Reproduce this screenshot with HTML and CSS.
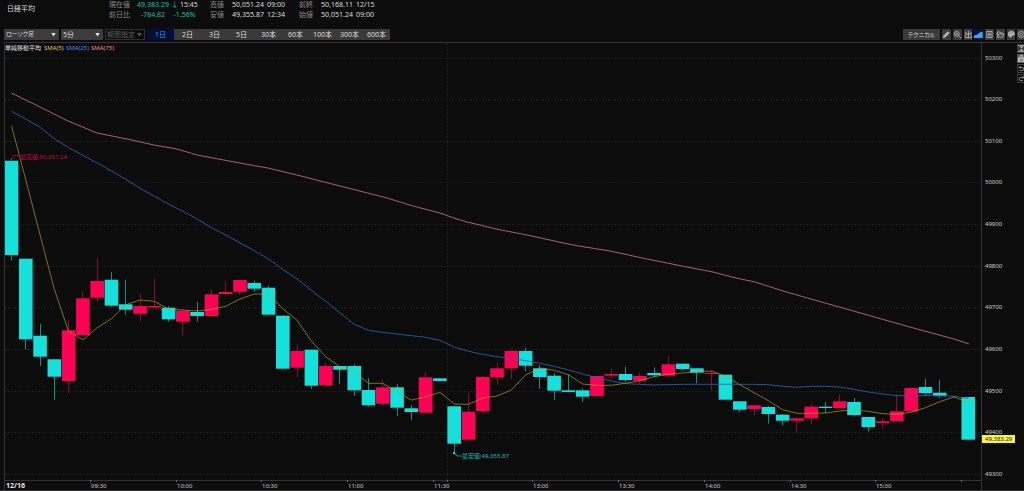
FILE: index.html
```html
<!DOCTYPE html>
<html lang="ja">
<head>
<meta charset="utf-8">
<title>日経平均</title>
<link rel="stylesheet" href="styles.css">
</head>
<body>
<header class="quote">
  <h1 class="name">日経平均</h1>
  <div class="figures">
    <span class="label">現在値</span><span class="num down">49,383.29</span><span class="num"><span class="down">↓</span> 15:45</span>
    <span class="label second">高値</span><span class="num">50,051.24</span><span class="time">09:00</span>
    <span class="label">前終</span><span class="num">50,168.11</span><span class="time">12/15</span>
    <span class="label">前日比</span><span class="num down">-784.82</span><span class="num down">-1.56%</span>
    <span class="label second">安値</span><span class="num">49,355.87</span><span class="time">12:34</span>
    <span class="label">始値</span><span class="num">50,051.24</span><span class="time">09:00</span>
  </div>
</header>

<nav class="toolbar">
  <label class="pick pick-type"><select aria-label="チャート種類"><option>ローソク足</option></select><span class="arrow"></span></label>
  <label class="pick pick-span"><select aria-label="足の間隔"><option>5分</option></select><span class="arrow"></span></label>
  <label class="pick pick-range off"><select aria-label="期間" disabled><option>期間指定</option></select><span class="arrow"></span></label>
  <div class="periods">
    <button class="on">1日</button><button>2日</button><button>3日</button><button>5日</button><button>30本</button><button>60本</button><button>100本</button><button>300本</button><button>600本</button>
  </div>
  <button class="technical">テクニカル</button>
  <div class="tools">
    <button aria-label="描画"><svg viewBox="0 0 10 10"><path class="fill" d="M1 9l.6-2.600L6.700 1.200l2 2L3.600 8.400z"/></svg></button>
    <button aria-label="拡大"><svg viewBox="0 0 10 10"><circle cx="4.300" cy="4.300" r="2.800"/><path d="M6.300 6.300L9 9M3 4.300h2.600M4.300 3v2.600"/></svg></button>
    <button aria-label="表示"><svg viewBox="0 0 10 10"><path d="M5 1v8M2 2v2.500h6V2M1.500 5.500v3h7v-3"/></svg></button>
    <button class="on" aria-label="出来高"><svg viewBox="0 0 10 10"><path class="blue" d="M0 9V6l4-1 2-2 4-1.500V9z"/></svg></button>
    <button aria-label="一覧"><svg viewBox="0 0 10 10"><path d="M2 1.500h6v7H2zM3.500 3.500h3M3.500 5h3M3.500 6.500h3"/></svg></button>
    <button aria-label="開く"><svg viewBox="0 0 10 10"><path d="M1.500 8V2h2.500l1 1.200h2.500v1.300M1.500 8l1.600-3.500H9L7.700 8z"/></svg></button>
    <button aria-label="配色"><svg viewBox="0 0 10 10"><path class="fill" fill-rule="evenodd" d="M5 1C2.500 1 1 2.700 1 4.800s1.600 3.700 3.500 3.700c1 0 .3-1.700 1.300-2S9 6.500 9 4.500 7.400 1 5 1zM3 3.200h1v1H3zM5.500 2.500h1v1h-1zM2.500 5.200h1v1h-1z"/></svg></button>
    <button aria-label="設定"><svg viewBox="0 0 10 10"><circle cx="5" cy="5" r="3.500"/><circle cx="5" cy="5" r="1.300"/></svg></button>
  </div>
</nav>

<main class="chart">
  <svg class="plot" viewBox="0 42 1024 449" role="img" aria-label="日経平均 5分足">
    <g id="grid"></g>
    <g id="candles"></g>
    <polyline id="sma75" class="sma pink" points="11.500,93 40,107 68,121 97,133 127,139 154,145 177,149 197,155 256,166 268,168 297,175 340,186 387,198 413,206 440,213 454,218 467,222 480,225 496,229 527,235 573,245 610,251 647,259 687,267 713,272 736,278 755,282 783,291 825,303 857,312 885,320 917,329 954,339 969,344"/>
    <polyline id="sma25" class="sma azure"/>
    <polyline id="sma5" class="sma yellow"/>
    <path class="frame" d="M4.500 491V42.500H1024M4 480.500H981M981.500 42V491M0 490.500H1024"/>
    <g class="legend">
      <text x="5" y="50" class="t-white">単純移動平均</text>
      <text x="44" y="50" class="t-yellow">SMA(5)</text>
      <text x="66" y="50" class="t-azure">SMA(25)</text>
      <text x="91" y="50" class="t-pink">SMA(75)</text>
    </g>
    <path class="lead-red" d="M12 158l2-2.500h6"/><circle cx="11.500" cy="159" r="1" fill="#d80048"/>
    <text x="20" y="159" class="t-red">最高値:50,051.24</text>
    <path class="lead-cyan" d="M454 453l3 3h5"/><circle cx="454" cy="453" r="1.200" fill="#14e0dc"/>
    <text x="462" y="458" class="t-cyan">最安値:49,355.87</text>
    <g id="axis"></g>
    <rect x="982" y="435" width="33" height="8" class="tag"/>
    <text x="985" y="441" class="tag-text">49,383.29</text>
  </svg>
  <div class="side">
    <button aria-label="上下"><svg viewBox="0 0 10 10"><path class="fill" d="M1 1h8v1H1zM2.500 2.500h5L5 4.700zM2.500 7.500h5L5 5.300zM1 8h8v1H1z"/></svg></button>
    <button class="lit" aria-label="固定"><svg viewBox="0 0 10 10"><path class="fill" fill-rule="evenodd" d="M1 4h2V2l2-1.200L7 2v2h2v5H1zM4 4h2V2.500H4zM3.500 6h3v1.500h-3z"/></svg></button>
    <button class="hollow" aria-label="元に戻す"><svg viewBox="0 0 10 10"><path d="M3.500 1.500L1.500 3.500l2 2M1.500 3.500H6a2 2 0 010 4.500H3"/></svg></button>
    <button class="hollow" aria-label="やり直し"><svg viewBox="0 0 10 10"><path d="M6.500 1.500l2 2-2 2M8.500 3.500H4A2 2 0 004 8h3"/></svg></button>
  </div>
</main>
<script src="chart.js"></script>
</body>
</html>
```

FILE: styles.css
```css
* { box-sizing: border-box; }
body {
  margin: 0;
  background: #0c0c0c;
  color: #dcdcdc;
  font: 7px/10px "Noto Sans", "Noto Sans CJK JP", sans-serif;
  overflow: hidden;
}
button, select { font: inherit; color: inherit; border: 0; padding: 0; margin: 0; border-radius: 0; }

.quote { display: flex; height: 28px; padding-left: 7px; }
.name { width: 102px; margin: 0; padding-top: 4px; font-size: 7px; font-weight: 400; line-height: 10px; }
.figures {
  display: grid;
  grid-template-columns: 28px 32px 31px 32px 32px 35px 22px 32px 24px;
  grid-auto-rows: 10px;
  white-space: nowrap;
}
.label { color: #8a8a8a; }
.second { padding-left: 10px; }
.num { text-align: center; }
.time { padding-left: 3px; }
.down { color: #0ec4ae; }

.toolbar { display: flex; height: 14px; padding: 1px 0 2px 4px; gap: 2px; overflow: hidden; }
.pick { display: grid; background: #3c3c3c; align-items: center; }
.pick select, .pick .arrow { grid-area: 1 / 1; }
.pick select { appearance: none; width: 100%; height: 11px; padding-left: 2px; background: transparent; line-height: 11px; outline: 0; }
.pick .arrow { justify-self: end; width: 5px; height: 4px; margin-right: 3px; background: #e4e4e4; clip-path: polygon(0 0, 100% 0, 50% 100%); pointer-events: none; }
.pick-type { width: 55px; }
.pick-type select { font-size: 6px; font-feature-settings: "palt"; }
.pick-span { width: 42px; }
.pick-range { width: 40px; }
.off { background: #0c0c0c; border: 1px solid #303030; }
.off select { height: 9px; padding-left: 1px; line-height: 9px; opacity: 1; color: #5c5c5c; }
.off .arrow { background: #5c5c5c; margin-right: 2px; }
.periods { display: flex; background: #3a3a3a; }
.periods button { width: 27px; background: #3a3a3a; line-height: 11px; }
.periods .on { background: #020f38; color: #2b9cf0; }
.technical { width: 37px; margin-left: auto; background: #3a3a3a; font-size: 6px; font-feature-settings: "palt"; }
.tools { display: flex; gap: 2px; width: 84px; margin-right: -2px; }
.tools button { flex: 1; min-width: 0; background: #3c3c3c; }
.tools .on { background: #03133f; }
.tools svg, .side svg { display: block; width: 100%; height: 9px; fill: none; stroke: #b8b8b8; stroke-width: 1; }
svg .fill { fill: #b8b8b8; stroke: none; }
svg .blue { fill: #35a4f4; stroke: none; }

.chart { position: relative; overflow: hidden; }
.plot { display: block; width: 100%; height: auto; font-size: 6px; }
.side { position: absolute; top: 2px; right: -2px; display: grid; gap: 1px; }
.side button { width: 9px; height: 9px; background: #3c3c3c; }
.side .lit { background: #5a5a5a; }
.side .hollow { background: #0c0c0c; border: 1px solid #3c3c3c; }
.side .hollow svg { height: 7px; }

.frame { fill: none; stroke: #343434; }
.gridline { stroke: #1b1b1b; stroke-dasharray: 2 1; }
.tick { stroke: #686868; }
.up-bar { fill: #ff0055; }
.down-bar { fill: #14e0dc; }
.up-wick { stroke: #8c0835; }
.down-wick { stroke: #108e8a; }
.sma { fill: none; stroke-width: 1; stroke-linejoin: round; }
.pink { stroke: #a86076; }
.azure { stroke: #2a60b4; stroke-opacity: .85; }
.yellow { stroke: #b8a818; stroke-opacity: .65; }
.t-white { fill: #e0e0e0; }
.t-yellow { fill: #d8cc18; }
.t-azure { fill: #3c88f8; }
.t-pink { fill: #f880a0; }
.t-red { fill: #d00448; }
.t-cyan { fill: #10c0b8; }
.lead-red { fill: none; stroke: #a00438; }
.lead-cyan { fill: none; stroke: #108e8a; }
.price, .clock { fill: #cccccc; }
.date { fill: #e4e4e4; font-size: 7px; font-weight: 700; }
.tag { fill: #fbf04c; }
.tag-text { fill: #302c08; }
```

FILE: chart.js
```js
// Each candle: slot, direction, body top, body bottom, wick top, wick bottom.
const candles = [
  [0,'d',160.7,255,160.7,260.5],[1,'d',258.7,339.3,258.7,349],[2,'d',335.7,356.7,323.7,366],
  [3,'d',359.3,376.7,359.3,399.7],[4,'u',330.3,381,320.3,393],[5,'u',298.3,335,291.7,335],
  [6,'u',281,297.7,257.7,302.3],[7,'d',279.7,305.7,272,306.7],[8,'d',304.3,309.7,279.7,314.7],
  [9,'u',306,313.7,294,321],[10,'u',306,307.5,278,307.5],[11,'d',307.7,319.3,306.3,321.7],
  [12,'u',310.7,321.7,309,335.7],[13,'d',312,316,302,321.7],[14,'u',294.3,316,289,316],
  [15,'u',292,294,281,295.3],[16,'u',280,291.7,280,295],[17,'d',283,288.7,280.7,291.3],
  [18,'d',287.7,314.7,285.7,314.7],[19,'d',315.7,368.7,315.7,368.7],[20,'u',351,367.7,344,377],
  [21,'d',349.7,385.7,349.7,389],[22,'u',366,385.3,362.7,385.3],[23,'d',366,369.7,366,383.7],
  [24,'d',366,390.3,364.3,395.7],[25,'d',390,405.3,378.3,406.7],[26,'u',387.3,403.7,379.3,405.7],
  [27,'d',387.3,407.7,384,416],[28,'d',408.3,412,405,420],[29,'u',377.3,412.7,372.3,412.7],
  [30,'d',378.3,381,378.3,381],[31,'d',406.3,443.7,406.3,452.7],[32,'u',411.7,439.7,393,440],
  [33,'u',377,411,376,413.7],[34,'u',368.3,377.3,362.7,384.3],[35,'u',351,368.3,350,379],
  [36,'d',351,365.7,348,371.3],[37,'d',368.3,377,365,388.7],[38,'d',375.7,390.7,373.3,400],
  [39,'d',390.3,392,374.7,392],[40,'d',390.3,396.7,388.3,402],[41,'u',376,396,376,396],
  [42,'u',374,375.7,368.7,377.3],[43,'d',374,380,367,382.3],[44,'u',376,380.7,372.3,383.7],
  [45,'d',373,375.3,367.3,377.3],[46,'u',364.3,375.7,356,375.7],[47,'d',363.7,369,363.7,370.3],
  [48,'d',368.3,372.7,368.3,383.3],[49,'u',373.1,374.1,370.7,390],[50,'d',374.7,399.7,374.7,400],
  [51,'d',401.3,409.7,401.3,412],[52,'u',405.3,409,405.3,415.7],[53,'d',407,414,406,423.7],
  [54,'d',414.7,420.7,414,425.3],[55,'u',418.3,420.7,417.3,432.3],[56,'u',406.7,418.3,403.3,424],
  [57,'d',406.7,408,402.3,413.3],[58,'u',401.3,408,394,408],[59,'d',402,415,398,416.3],
  [60,'d',417,427,417,431.7],[61,'u',421.3,423,418.3,428.7],[62,'u',411.3,421,394,421],
  [63,'u',388,411.3,387,411.3],[64,'d',387,393,378.7,396],[65,'d',392.7,396,380,397.7],
  [67,'d',397,439.7,397,439.7]
];
const sma5 = [125.7,180,235,289.3,331.3,340,327.7,318.7,304.7,300,301.3,309,310,311,309.3,306.3,299,294,294,
  308.7,320.3,341,356.7,366.7,371.7,383.3,383.3,391.7,400,397,392.3,404,404.3,398,396,390,375,368,370.3,374.7,
  384,385.3,385.3,383.3,380.7,376.7,374,373,371.7,371,376,384.7,392.7,400.7,409.7,413.3,413.3,413,411,410,
  411.3,413.7,414.3,412.3,407.7,401.7,397,402.3];
const sma25 = [111.3,119,127.3,138.7,147.7,155.3,163,171,179.3,188.3,196.3,204,211.3,219,227.7,235,242.9,250.7,259,
  269.3,279,290.3,301.3,312.7,324.3,330.3,332.3,334,335.7,337.3,340.3,347,351.3,354.3,356.7,358.3,360.7,363.3,
  366.3,370,374,377.7,381,383.7,384.3,385,384.7,384.3,384.3,384.3,384.3,384.3,384.3,384.7,386.3,387.3,386.3,
  386.3,387,389.3,392,394,395.7,395.7,395.7,395.7,396.3,398.3];

const step = 14.28;
const center = slot => 11.5 + slot * step;
const svgNs = 'http://www.w3.org/2000/svg';

function add(parent, tag, attrs, text) {
  const node = document.createElementNS(svgNs, tag);
  for (const key in attrs) node.setAttribute(key, attrs[key]);
  if (text) node.textContent = text;
  document.getElementById(parent).appendChild(node);
}

for (let i = 0; i <= 10; i++) {
  const y = Math.round(57.5 + i * 41.65);
  add('grid', 'line', { x1: 5, x2: 981, y1: y + 0.5, y2: y + 0.5, class: 'gridline' });
  add('axis', 'text', { x: 985, y: y + 2, class: 'price' }, String(50300 - i * 100));
}
add('grid', 'line', { x1: 447.5, x2: 447.5, y1: 43, y2: 480, class: 'gridline' });

for (const [slot, dir, top, bottom, high, low] of candles) {
  const kind = dir === 'u' ? 'up' : 'down';
  const x = center(slot);
  const wick = Math.floor(x) + 0.5;
  add('candles', 'line', { x1: wick, x2: wick, y1: high, y2: low, class: kind + '-wick' });
  add('candles', 'rect', { x: x - 6.8, y: top, width: 13.6, height: bottom - top, class: kind + '-bar' });
}

const trace = values => values.map((y, i) => center(i).toFixed(1) + ',' + y).join(' ');
document.getElementById('sma5').setAttribute('points', trace(sma5));
document.getElementById('sma25').setAttribute('points', trace(sma25));

const clocks = [[90,'09:30'],[176,'10:00'],[261,'10:30'],[347,'11:00'],[433,'11:30'],[447,''],
  [532,'13:00'],[618,'13:30'],[704,'14:00'],[790,'14:30'],[875,'15:00'],[961,'']];
for (const [x, label] of clocks) {
  add('axis', 'line', { x1: x + 0.5, x2: x + 0.5, y1: 480, y2: 482, class: 'tick' });
  if (label) add('axis', 'text', { x: x + 1, y: 488, class: 'clock' }, label);
}
add('axis', 'text', { x: 6, y: 488, class: 'date' }, '12/16');
```
